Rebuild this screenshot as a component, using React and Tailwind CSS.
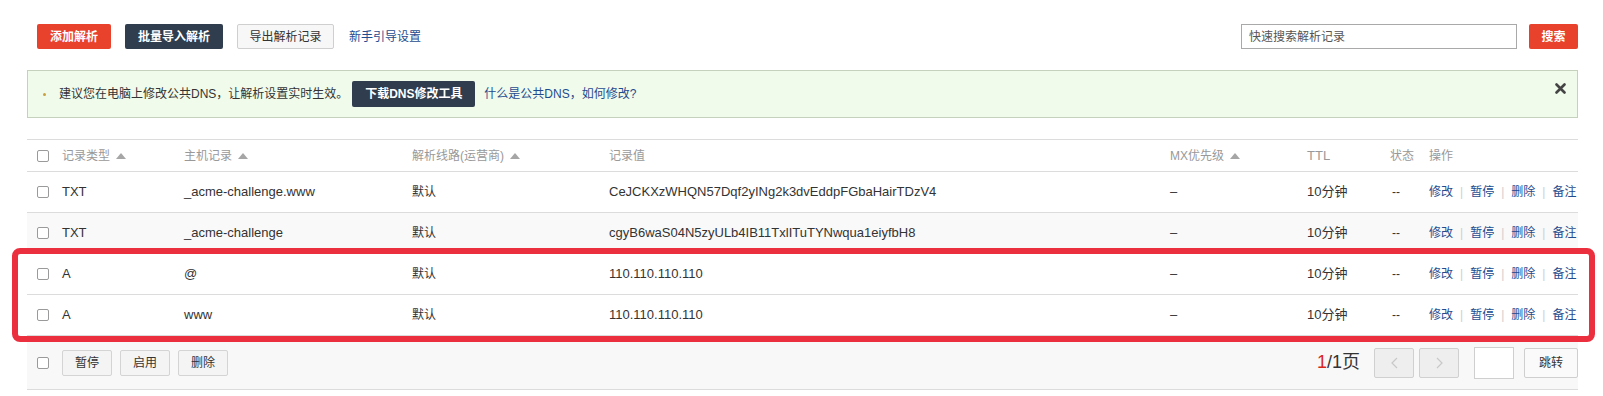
import React from "react";

const Check = () => (
  <span className="inline-block w-[12px] h-[12px] border border-[#9a9a9a] rounded-[2px] bg-white shrink-0" />
);

const Tri = () => (
  <svg width="10" height="6" viewBox="0 0 10 6" className="ml-[6px] inline-block">
    <path d="M0 6 L5 0 L10 6 Z" fill="#a6a6a6" />
  </svg>
);

const cols =
  "grid grid-cols-[35px_122px_228px_197px_561px_137px_83px_39px_149px] items-center";

const rows = [
  { t: "TXT", h: "_acme-challenge.www", v: "CeJCKXzWHQN57Dqf2yINg2k3dvEddpFGbaHairTDzV4", bg: "bg-white" },
  { t: "TXT", h: "_acme-challenge", v: "cgyB6waS04N5zyULb4IB11TxlITuTYNwqua1eiyfbH8", bg: "bg-[#f9f9f9]" },
  { t: "A", h: "@", v: "110.110.110.110", bg: "bg-white" },
  { t: "A", h: "www", v: "110.110.110.110", bg: "bg-white" },
];

const Sep = () => <span className="px-[7px] text-[#cfcfcf]">|</span>;

const Row = ({ r }) => (
  <div className={`${cols} h-[41px] border-b border-[#dcdcdc] ${r.bg} text-[#333]`}>
    <div className="pl-[10px] flex items-center"><Check /></div>
    <div className="text-[13px]">{r.t}</div>
    <div className="text-[13px]">{r.h}</div>
    <div className="text-[12px]">默认</div>
    <div className="text-[13px]">{r.v}</div>
    <div className="text-[13px]">–</div>
    <div className="text-[13px]">10分钟</div>
    <div className="text-[12px] pl-[2px]">--</div>
    <div className="text-[12px] text-[#1f4c8f] flex items-center whitespace-nowrap">
      <span>修改</span><Sep /><span>暂停</span><Sep /><span>删除</span><Sep /><span>备注</span>
    </div>
  </div>
);

export default function App() {
  return (
    <div className="w-[1603px] h-[396px] bg-white font-['Liberation_Sans','Noto_Sans_CJK_SC',sans-serif] text-[12px] text-[#333] pl-[27px] pr-[25px] pt-[24px] overflow-hidden">
      {/* top bar */}
      <div className="flex items-center h-[25px] pl-[10px]">
        <button className="h-[25px] w-[74px] bg-[#e8412c] rounded-[2px] text-white font-bold text-[12px]">添加解析</button>
        <button className="ml-[14px] h-[25px] w-[98px] bg-[#2f3d4e] rounded-[2px] text-white font-bold text-[12px]">批量导入解析</button>
        <button className="ml-[14px] h-[25px] w-[97px] bg-[#f7f7f7] border border-[#cfcfcf] rounded-[2px] text-[#333] text-[12px]">导出解析记录</button>
        <span className="ml-[15px] text-[#1f4c8f] text-[12px]">新手引导设置</span>
        <div className="ml-auto flex items-center">
          <div className="w-[276px] h-[25px] border border-[#a9a9a9] bg-white flex items-center pl-[7px] text-[12px] text-[#555]">快速搜索解析记录</div>
          <button className="ml-[12px] h-[25px] w-[49px] bg-[#e8412c] rounded-[2px] text-white font-bold text-[12px]">搜索</button>
        </div>
      </div>

      {/* alert */}
      <div className="mt-[21px] h-[48px] bg-[#f1fbec] border border-[#c6d1bd] flex items-center relative">
        <span className="ml-[15px] w-[3px] h-[3px] rounded-full bg-[#c8a040]" />
        <span className="ml-[13px] text-[12px] text-[#333]">建议您在电脑上修改公共DNS，让解析设置实时生效。</span>
        <button className="ml-[4px] h-[26px] w-[123px] bg-[#2f3d4e] rounded-[2px] text-white font-bold text-[12px]">下载DNS修改工具</button>
        <span className="ml-[9px] text-[12px] text-[#1f4c8f]">什么是公共DNS，如何修改?</span>
        <svg width="11" height="11" viewBox="0 0 11 11" className="absolute right-[11px] top-[12px]">
          <path d="M1.5 1.5 L9.5 9.5 M9.5 1.5 L1.5 9.5" stroke="#444" strokeWidth="2.6" strokeLinecap="round" />
        </svg>
      </div>

      {/* table */}
      <div className="mt-[21px] border-t border-[#dcdcdc]">
        <div className={`${cols} h-[32px] border-b border-[#dcdcdc] text-[12px] text-[#999]`}>
          <div className="pl-[10px] flex items-center"><Check /></div>
          <div className="flex items-center">记录类型<Tri /></div>
          <div className="flex items-center">主机记录<Tri /></div>
          <div className="flex items-center">解析线路(运营商)<Tri /></div>
          <div>记录值</div>
          <div className="flex items-center">MX优先级<Tri /></div>
          <div className="text-[13px]">TTL</div>
          <div>状态</div>
          <div>操作</div>
        </div>
        <Row r={rows[0]} />
        <Row r={rows[1]} />
        <div className="relative">
          <Row r={rows[2]} />
          <Row r={rows[3]} />
          <div className="absolute -left-[15px] -right-[17px] -top-[6px] -bottom-[6px] border-[6px] border-[#ec2f3e] rounded-[8px] pointer-events-none" />
        </div>
        {/* footer */}
        <div className="h-[54px] bg-[#f8f8f8] border-b border-[#dcdcdc] flex items-center">
          <div className="pl-[10px] flex items-center"><Check /></div>
          <button className="ml-[13px] h-[26px] w-[50px] bg-[#f4f4f4] border border-[#d4d4d4] rounded-[2px] text-[12px] text-[#333]">暂停</button>
          <button className="ml-[8px] h-[26px] w-[50px] bg-[#f4f4f4] border border-[#d4d4d4] rounded-[2px] text-[12px] text-[#333]">启用</button>
          <button className="ml-[8px] h-[26px] w-[50px] bg-[#f4f4f4] border border-[#d4d4d4] rounded-[2px] text-[12px] text-[#333]">删除</button>
          <div className="ml-auto flex items-center">
            <span className="text-[18px] text-[#333]"><span className="text-[#d9261c]">1</span>/1页</span>
            <div className="ml-[14px] w-[40px] h-[30px] bg-[#eeeeee] border border-[#d0d0d0] rounded-[2px] flex items-center justify-center">
              <svg width="7" height="12" viewBox="0 0 7 12"><path d="M6 1 L1 6 L6 11" fill="none" stroke="#c8c8c8" strokeWidth="1.2" /></svg>
            </div>
            <div className="ml-[5px] w-[40px] h-[30px] bg-[#eeeeee] border border-[#d0d0d0] rounded-[2px] flex items-center justify-center">
              <svg width="7" height="12" viewBox="0 0 7 12"><path d="M1 1 L6 6 L1 11" fill="none" stroke="#c8c8c8" strokeWidth="1.2" /></svg>
            </div>
            <div className="ml-[15px] w-[40px] h-[32px] bg-white border border-[#cfcfcf]" />
            <button className="ml-[10px] h-[30px] w-[54px] bg-[#fafafa] border border-[#cfcfcf] rounded-[2px] text-[12px] text-[#333]">跳转</button>
          </div>
        </div>
      </div>
    </div>
  );
}
